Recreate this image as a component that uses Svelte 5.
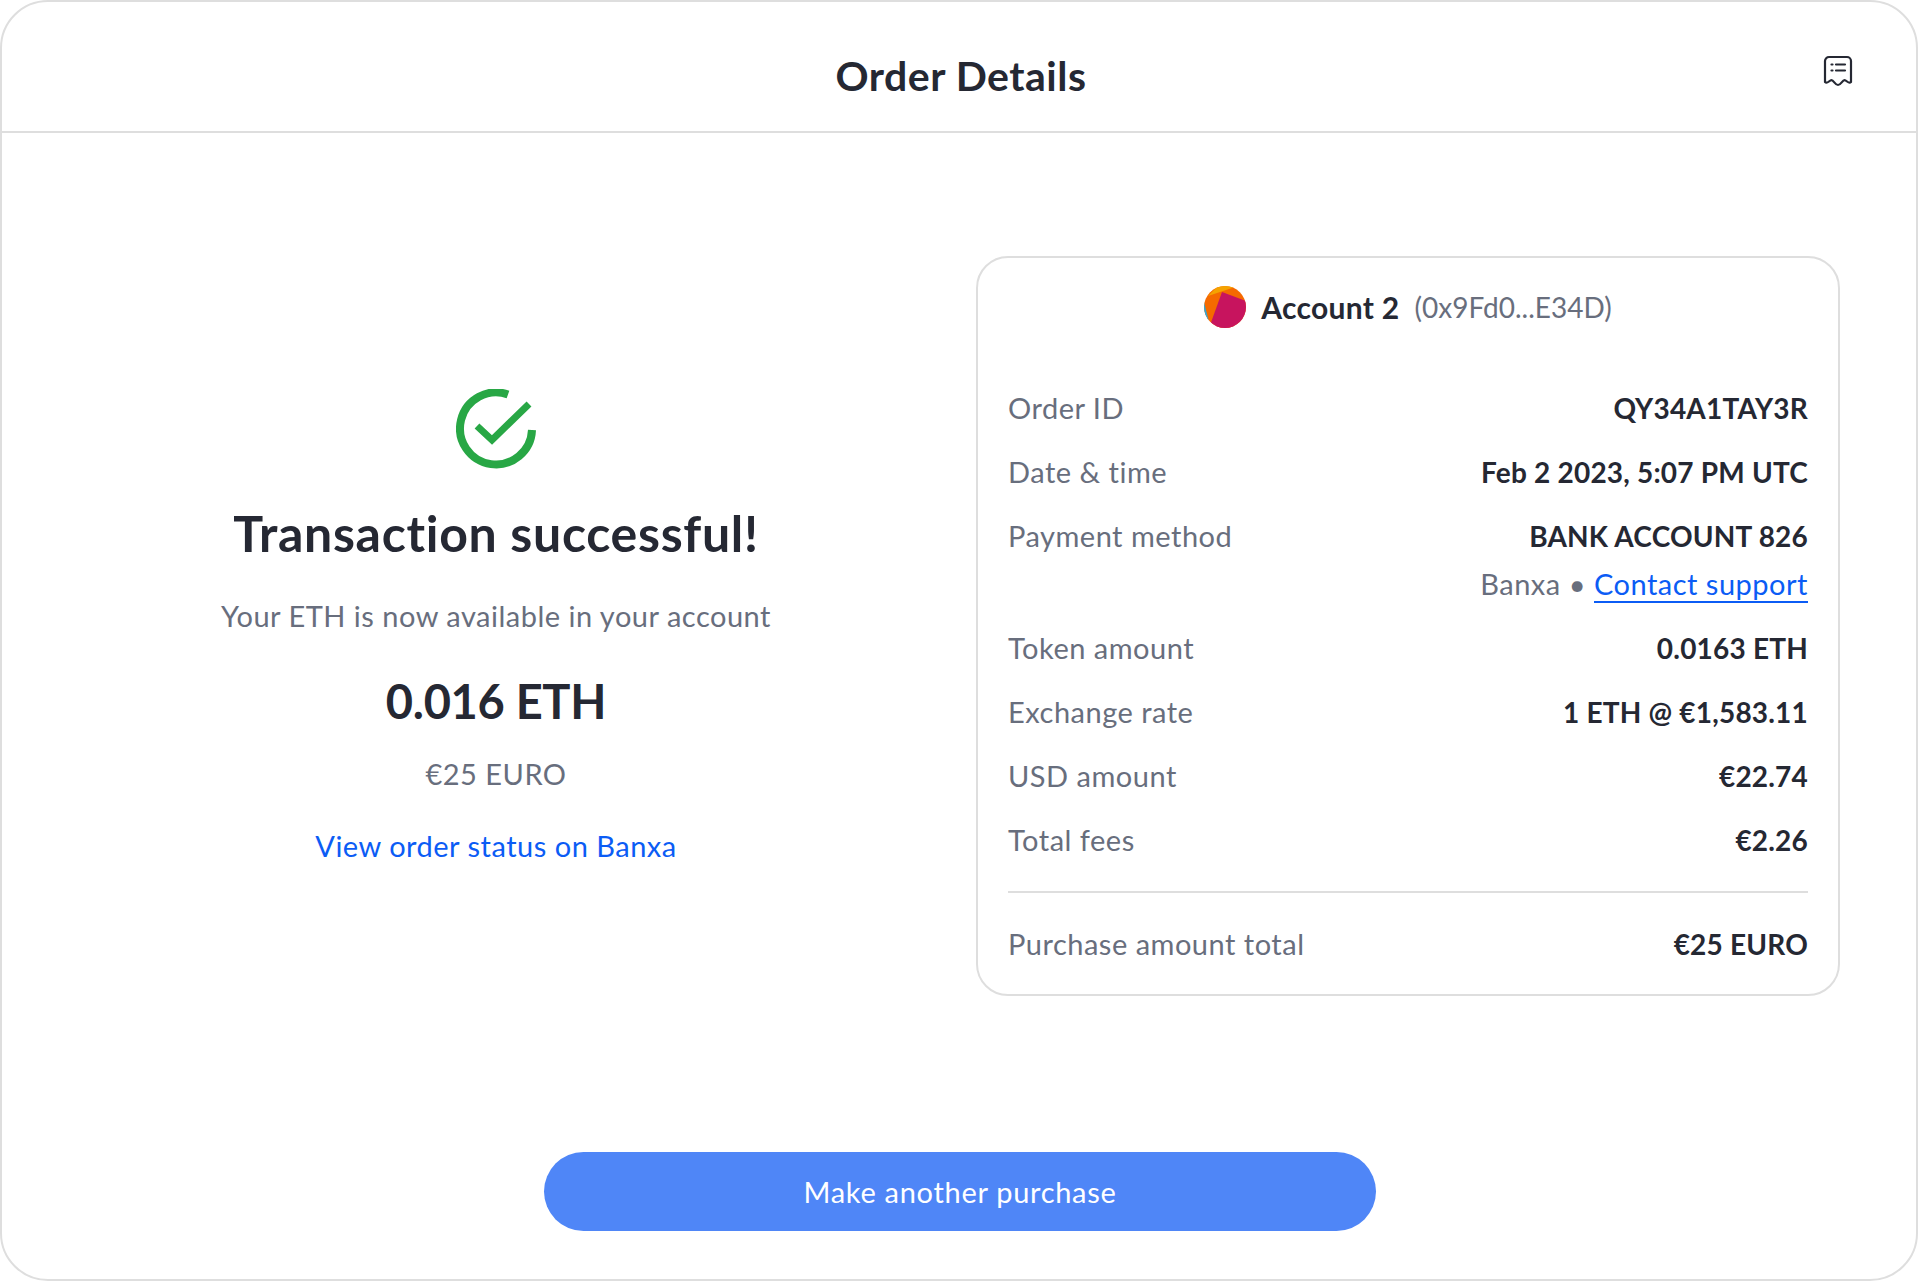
<script>
  const rows = [
    { label: 'Order ID', value: 'QY34A1TAY3R' },
    { label: 'Date & time', value: 'Feb 2 2023, 5:07 PM UTC' },
    { label: 'Payment method', value: 'BANK ACCOUNT 826', provider: 'Banxa' },
    { label: 'Token amount', value: '0.0163 ETH' },
    { label: 'Exchange rate', value: '1 ETH @ €1,583.11' },
    { label: 'USD amount', value: '€22.74' },
    { label: 'Total fees', value: '€2.26' }
  ];
</script>

<div class="frame">
  <header class="header">
    <h1>Order Details</h1>
    <button class="receipt" aria-label="Receipt">
      <svg width="30" height="32" viewBox="0 0 30 32" fill="none" stroke="#252833" stroke-width="2.2" stroke-linecap="round" stroke-linejoin="round">
        <path d="M6 2h18a4 4 0 0 1 4 4v21c-2.400 2.400-4.200-1.800-6.500-1.800S18 30 15 30s-4.200-4.800-6.500-4.800S4.400 29.400 2 27V6a4 4 0 0 1 4-4z" />
        <path d="M8.500 9.500h1M13 9.500h9M8.500 15.500h1M13 15.500h9" />
      </svg>
    </button>
  </header>

  <main class="content">
    <section class="status">
      <svg class="check" width="80" height="80" viewBox="0 0 80 80" fill="none" stroke="#28a745">
        <path stroke-width="8" d="M52 5.500A36 36 0 1 0 76 41" />
        <path stroke-width="7" d="M21 37l15 14 37-36" />
      </svg>
      <h2>Transaction successful!</h2>
      <p class="note">Your ETH is now available in your account</p>
      <div class="amount">0.016 ETH</div>
      <div class="fiat">€25 EURO</div>
      <a class="link" href="#order">View order status on Banxa</a>
    </section>

    <section class="card">
      <div class="account">
        <svg class="avatar" width="42" height="42" viewBox="0 0 42 42">
          <defs><clipPath id="disc"><circle cx="21" cy="21" r="21" /></clipPath></defs>
          <g clip-path="url(#disc)">
            <rect width="42" height="42" fill="#f56a00" />
            <path d="M4 10L14 0h20z" fill="#f5a300" />
            <path d="M0 16L6 40l-6 2z" fill="#2fa8d8" />
            <path d="M18 6L42 15v27H5z" fill="#c7145e" />
            <path d="M42 30l-9 9 5 3h4z" fill="#f03010" />
          </g>
        </svg>
        <strong>Account 2</strong>
        <span>(0x9Fd0...E34D)</span>
      </div>

      <dl class="rows">
        {#each rows as row}
          <div class="row">
            <dt>{row.label}</dt>
            <dd>
              {row.value}
              {#if row.provider}
                <div class="provider">{row.provider} • <a href="#support">Contact support</a></div>
              {/if}
            </dd>
          </div>
        {/each}
      </dl>

      <div class="row total">
        <span class="label">Purchase amount total</span>
        <span class="value">€25 EURO</span>
      </div>
    </section>
  </main>

  <footer class="footer">
    <button class="primary">Make another purchase</button>
  </footer>
</div>

<style>
  :global(body) {
    margin: 0;
    background: #fff;
  }

  .frame {
    box-sizing: border-box;
    height: 1281px;
    display: flex;
    flex-direction: column;
    border: 2px solid #dedede;
    border-radius: 48px;
    font-family: Lato, "Noto Sans", sans-serif;
    font-size: 29px;
    letter-spacing: 0.5px;
    line-height: 48px;
    color: #252833;
  }

  .header {
    position: relative;
    height: 129px;
    flex: none;
    display: flex;
    align-items: center;
    justify-content: center;
    border-bottom: 2px solid #dedede;
  }

  h1 {
    margin: 19px 0 0 4px;
    font-size: 41px;
    letter-spacing: 0.5px;
    font-weight: 700;
  }

  .receipt {
    position: absolute;
    top: 53px;
    right: 63px;
    padding: 0;
    border: 0;
    background: none;
    line-height: 0;
  }

  .content {
    display: grid;
    grid-template-columns: 836px 864px;
    gap: 62px;
    padding: 123px 64px 0 76px;
    align-items: center;
  }

  .status {
    display: flex;
    flex-direction: column;
    align-items: center;
    padding-top: 6px;
  }

  .check {
    margin-bottom: 36px;
  }

  h2 {
    margin: 0 0 31px;
    font-size: 50px;
    letter-spacing: 0.7px;
    line-height: 56px;
    font-weight: 700;
  }

  .note,
  .fiat {
    margin: 0;
    color: #686e7d;
  }

  .amount {
    margin: 31px 0 19px;
    font-size: 47px;
    letter-spacing: -0.3px;
    line-height: 60px;
    font-weight: 700;
  }

  .link,
  .provider a {
    color: #0b5cf5;
    text-decoration: none;
  }

  .link {
    margin-top: 24px;
  }

  .card {
    box-sizing: border-box;
    height: 740px;
    padding: 25px 30px;
    border: 2px solid #dedede;
    border-radius: 32px;
  }

  .account {
    display: flex;
    align-items: center;
    justify-content: center;
    gap: 15px;
    height: 48px;
    margin-bottom: 53px;
  }

  .account strong {
    font-size: 30px;
    letter-spacing: 0.3px;
  }

  .account span {
    font-size: 28px;
    letter-spacing: 0;
    color: #686e7d;
  }

  .rows {
    margin: 0;
    padding-bottom: 27px;
    border-bottom: 2px solid #dedede;
  }

  .row {
    display: flex;
    justify-content: space-between;
    margin-bottom: 16px;
  }

  .rows .row:last-child {
    margin-bottom: 0;
  }

  dt,
  .label {
    color: #686e7d;
  }

  dd,
  .value {
    margin: 0;
    text-align: right;
    font-size: 28px;
    letter-spacing: 0.2px;
    font-weight: 700;
  }

  .provider {
    font-size: 29px;
    letter-spacing: 0.5px;
    font-weight: 400;
    color: #686e7d;
  }

  .provider a {
    border-bottom: 2px solid #0b5cf5;
  }

  .total {
    margin: 27px 0 0;
  }

  .footer {
    margin-top: auto;
    padding: 0 0 48px 2px;
    display: flex;
    justify-content: center;
  }

  .primary {
    width: 832px;
    height: 79px;
    border: 0;
    border-radius: 40px;
    background: #4f86f7;
    color: #fff;
    font: inherit;
    letter-spacing: 0.7px;
  }
</style>
